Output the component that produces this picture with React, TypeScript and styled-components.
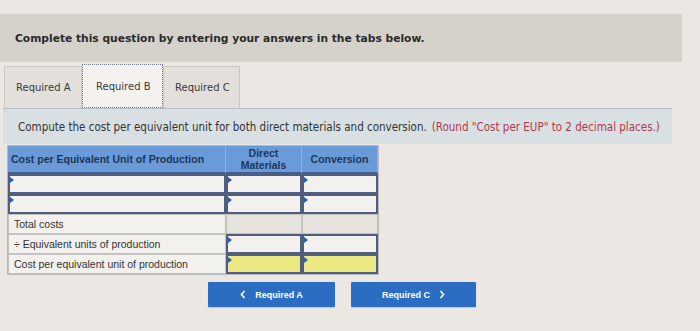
import styled, { createGlobalStyle } from "styled-components";

const GlobalStyle = createGlobalStyle`
  html, body {
    margin: 0;
    padding: 0;
    background: #ebe8e3;
  }
  body {
    width: 700px;
    height: 331px;
    overflow: hidden;
    font-family: "DejaVu Sans", Verdana, sans-serif;
  }
`;

const Page = styled.div`
  padding-top: 14px;
`;

const Banner = styled.div`
  width: 667px;
  height: 48px;
  padding-left: 15px;
  display: flex;
  align-items: center;
  background: #d5d2cc;
  font-weight: bold;
  font-size: 10.7px;
  color: #2a2a2a;
`;

const TabStrip = styled.div`
  display: flex;
  align-items: flex-end;
  height: 44px;
  margin: 2px 0 0 4px;
`;

const Tab = styled.div<{ $w: number; $active?: boolean }>`
  box-sizing: border-box;
  width: ${(p) => p.$w}px;
  height: ${(p) => (p.$active ? 44 : 42)}px;
  padding-left: ${(p) => (p.$active ? 13 : 11)}px;
  display: flex;
  align-items: center;
  font-size: 10px;
  color: #3a3a3a;
  background: ${(p) => (p.$active ? "#f4f2ef" : "#e3e0db")};
  border: ${(p) => (p.$active ? "1px dotted #6f7790" : "1px solid #cbc8c3")};
  border-bottom: ${(p) => (p.$active ? "1px dotted #6f7790" : "none")};
`;

const Prompt = styled.div`
  box-sizing: border-box;
  width: 669px;
  height: 36px;
  margin-left: 3px;
  padding-left: 15px;
  display: flex;
  align-items: center;
  background: #d9e0e3;
  border-top: 1px solid #b7bdc1;
  font-family: "DejaVu Sans Condensed", "DejaVu Sans", sans-serif;
  font-size: 11.5px;
  color: #333;
  white-space: nowrap;
`;

const Note = styled.span`
  color: #b3394b;
  margin-left: 5px;
`;

const Grid = styled.div`
  display: grid;
  grid-template-columns: 218px 76px 76px;
  grid-template-rows: 28px repeat(5, 20px);
  width: 370px;
  margin: 2px 0 0 8px;
  font-family: "Liberation Sans", Arial, sans-serif;
  background: #f2f0ec;
  box-shadow: 0 0 0 1px #b9b9b9;
`;

const Head = styled.div<{ $left?: boolean }>`
  box-sizing: border-box;
  display: flex;
  align-items: center;
  justify-content: ${(p) => (p.$left ? "flex-start" : "center")};
  padding-left: ${(p) => (p.$left ? 3 : 0)}px;
  text-align: center;
  background: #6a9bd8;
  border-right: 1px solid #8fb2de;
  border-bottom: 2px solid #3f5f95;
  font-weight: bold;
  font-size: 10.5px;
  line-height: 12px;
  color: #1d3658;
`;

type CellKind = "input" | "label" | "blank" | "yellow";

const Cell = styled.div<{ $kind: CellKind }>`
  position: relative;
  box-sizing: border-box;
  display: flex;
  align-items: center;
  padding-left: 5px;
  font-size: 10.5px;
  color: #333;
  white-space: nowrap;
  background: ${(p) =>
    p.$kind === "yellow" ? "#ece983" : p.$kind === "blank" ? "#e7e4e0" : "#f3f1ed"};
  border: ${(p) =>
    p.$kind === "input" || p.$kind === "yellow"
      ? "2px solid #505d7e"
      : "1px solid #c3c2c0"};

  &::before {
    content: "";
    display: ${(p) => (p.$kind === "input" || p.$kind === "yellow" ? "block" : "none")};
    position: absolute;
    top: 1px;
    left: 0;
    border-left: 4px solid #2f5fa6;
    border-top: 3px solid transparent;
    border-bottom: 3px solid transparent;
  }
`;

const Actions = styled.div`
  display: flex;
  gap: 16px;
  margin: 8px 0 0 208px;
`;

const NavButton = styled.button<{ $w: number }>`
  width: ${(p) => p.$w}px;
  height: 25px;
  display: flex;
  align-items: center;
  justify-content: center;
  gap: 9px;
  border: none;
  border-radius: 1px;
  background: #2c6dc4;
  color: #fff;
  font-family: "Liberation Sans", Arial, sans-serif;
  font-weight: bold;
  font-size: 9px;
  box-shadow: 0 1px 1px rgba(0, 0, 0, 0.15);
`;

const Chevron = ({ dir }: { dir: "left" | "right" }) => (
  <svg width="6" height="9" viewBox="0 0 6 9">
    <path
      d={dir === "left" ? "M4.5 1 L1.5 4.5 L4.5 8" : "M1.5 1 L4.5 4.5 L1.5 8"}
      fill="none"
      stroke="#fff"
      strokeWidth="1.6"
    />
  </svg>
);

const rows: { label: string; kinds: CellKind[] }[] = [
  { label: "", kinds: ["input", "input", "input"] },
  { label: "", kinds: ["input", "input", "input"] },
  { label: "Total costs", kinds: ["label", "blank", "blank"] },
  { label: "÷ Equivalent units of production", kinds: ["label", "input", "input"] },
  { label: "Cost per equivalent unit of production", kinds: ["label", "yellow", "yellow"] },
];

export default function App() {
  return (
    <>
      <GlobalStyle />
      <Page>
        <Banner>Complete this question by entering your answers in the tabs below.</Banner>
        <TabStrip>
          <Tab $w={78}>Required A</Tab>
          <Tab $w={81} $active>
            Required B
          </Tab>
          <Tab $w={77}>Required C</Tab>
        </TabStrip>
        <Prompt>
          Compute the cost per equivalent unit for both direct materials and conversion.
          <Note>(Round "Cost per EUP" to 2 decimal places.)</Note>
        </Prompt>
        <Grid>
          <Head $left>Cost per Equivalent Unit of Production</Head>
          <Head>
            Direct
            <br />
            Materials
          </Head>
          <Head>Conversion</Head>
          {rows.map((r, i) =>
            r.kinds.map((k, j) => (
              <Cell key={`${i}-${j}`} $kind={k}>
                {j === 0 ? r.label : null}
              </Cell>
            ))
          )}
        </Grid>
        <Actions>
          <NavButton $w={127}>
            <Chevron dir="left" />
            Required A
          </NavButton>
          <NavButton $w={125}>
            Required C
            <Chevron dir="right" />
          </NavButton>
        </Actions>
      </Page>
    </>
  );
}
